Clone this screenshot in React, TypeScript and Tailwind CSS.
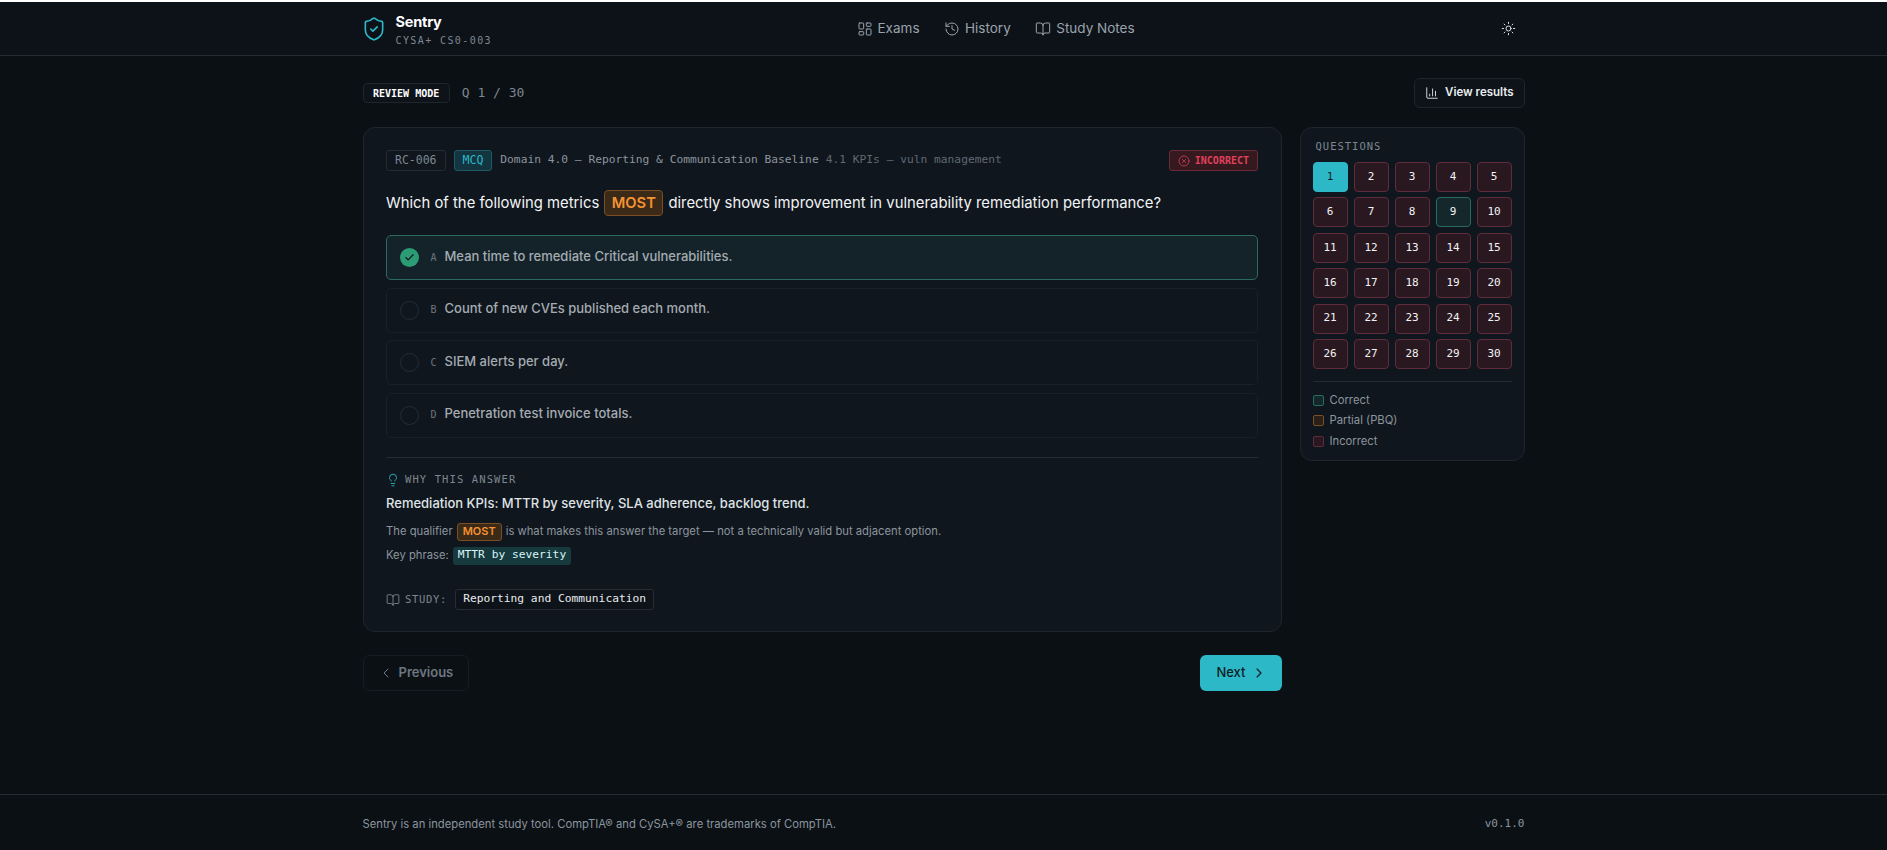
import { BookOpen, ChartColumn, Check, ChevronLeft, ChevronRight, CircleX, History, Lightbulb, LayoutDashboard, ShieldCheck, Sun } from "lucide-react";

const mono = "font-['DejaVu_Sans_Mono',monospace]";

function Most({ big }: { big?: boolean }) {
  return big ? (
    <span className="inline-flex h-[26px] items-center rounded-[4px] border border-[#7a4f22] bg-[#3a2a17] px-[6.5px] text-[14.7px] font-semibold text-[#f59332]">MOST</span>
  ) : (
    <span className="inline-flex h-[18px] items-center rounded-[3px] border border-[#7a4f22] bg-[#3a2a17] px-[5px] text-[11px] font-semibold text-[#f59332]">MOST</span>
  );
}

const options = [
  ["A", "Mean time to remediate Critical vulnerabilities."],
  ["B", "Count of new CVEs published each month."],
  ["C", "SIEM alerts per day."],
  ["D", "Penetration test invoice totals."],
];

export default function App() {
  return (
    <div className="flex h-[850px] flex-col bg-[#0b1015] font-['Inter',sans-serif] text-[#e8ecef]">
      <div className="h-[2px] bg-white" />
      <header className="flex h-[54px] justify-center border-b border-[#262c33] bg-[#0d1219]">
        <div className="flex w-[1162px] items-center">
          <div className="flex w-[494px] items-center gap-[9px]">
            <ShieldCheck size={26} strokeWidth={1.5} className="-ml-[2px] text-[#2db8c8]" />
            <div className="pt-[3px]">
              <div className="text-[14.5px] leading-[18px] font-bold tracking-[-0.2px] text-white">Sentry</div>
              <div className={`${mono} mt-[3px] text-[10px] leading-[14px] tracking-[1.4px] text-[#7d8791]`}>CYSA+ CS0-003</div>
            </div>
          </div>
          <nav className="flex items-center gap-[24.5px] text-[13.5px] text-[#9aa3ac]">
            <span className="flex items-center gap-[5px]"><LayoutDashboard size={16} strokeWidth={1.5} />Exams</span>
            <span className="flex items-center gap-[5px]"><History size={16} strokeWidth={1.5} />History</span>
            <span className="flex items-center gap-[5px]"><BookOpen size={16} strokeWidth={1.5} />Study Notes</span>
          </nav>
          <div className="mr-[9px] ml-auto text-[#e8ecef]"><Sun size={15} strokeWidth={1.5} /></div>
        </div>
      </header>

      <main className="flex flex-1 justify-center pt-[22px]">
        <div className="w-[1162px]">
          <div className="flex h-[30px] items-center">
            <span className={`${mono} flex h-[20px] items-center rounded-[4px] border border-[#1e252c] bg-[#0e1319] px-[9.5px] text-[10px] font-bold text-white`}>REVIEW MODE</span>
            <span className={`${mono} ml-[12px] text-[13px] text-[#7d8791]`}>Q 1 / 30</span>
            <button className="ml-auto flex h-[30px] items-center gap-[6px] rounded-[6px] border border-[#1e252c] bg-[#0e1319] px-[10px] text-[11.5px] font-semibold text-[#e8ecef]">
              <ChartColumn size={14} strokeWidth={1.5} />View results
            </button>
          </div>

          <div className="mt-[19px] flex items-start gap-[18px]">
            <div className="w-[919px]">
              <section className="rounded-[12px] border border-[#1e252c] bg-[#10161d] px-[22.5px] pt-[22px] pb-[20.5px]">
                <div className={`${mono} flex h-[21px] items-center text-[11.25px]`}>
                  <span className="flex h-[21px] items-center rounded-[3px] border border-[#262c33] px-[8px] text-[11.5px] text-[#7d8791]">RC-006</span>
                  <span className="ml-[8px] flex h-[21px] items-center rounded-[3px] border border-[#1d5a66] bg-[#123540] px-[8px] text-[11.5px] text-[#2db8c8]">MCQ</span>
                  <span className="ml-[8px] text-[#8c959e]">Domain 4.0 — Reporting &amp; Communication Baseline</span>
                  <span className="ml-[7px] text-[#5f6973]">4.1 KPIs — vuln management</span>
                  <span className="ml-auto flex h-[21px] items-center gap-[5px] rounded-[3px] border border-[#6b2a38] bg-[#35191f] px-[8px] text-[10px] font-bold text-[#e0405a]">
                    <CircleX size={12} strokeWidth={1.5} />INCORRECT
                  </span>
                </div>

                <h2 className="mt-[18px] flex h-[28px] items-center gap-[5px] text-[14.85px] font-normal text-[#f1f4f6]">
                  Which of the following metrics <Most big /> directly shows improvement in vulnerability remediation performance?
                </h2>

                <div className="mt-[18px] flex flex-col gap-[7.5px]">
                  {options.map(([letter, text], i) => (
                    <div key={letter} className={`flex h-[45px] items-center rounded-[5px] border pl-[12.5px] ${i === 0 ? "border-[#2b6a60] bg-[#14232a]" : "border-[#1a2027] bg-[#10161d]"}`}>
                      {i === 0 ? (
                        <span className="flex h-[19px] w-[19px] items-center justify-center rounded-full bg-[#2b9c74] text-[#0d1219]"><Check size={11} strokeWidth={2.5} /></span>
                      ) : (
                        <span className="h-[19px] w-[19px] rounded-full border border-[#262c33]" />
                      )}
                      <span className={`${mono} -mt-[1px] ml-[12px] w-[14px] text-[10px] text-[#6d7680]`}>{letter}</span>
                      <span className="-mt-[2px] text-[13px] font-medium text-[#a4abb2]">{text}</span>
                    </div>
                  ))}
                </div>

                <div className="mt-[19px] border-t border-[#262c33] pt-[14px]">
                  <div className={`${mono} flex h-[16px] items-center gap-[5px] text-[10.5px] tracking-[1.1px] text-[#7d8791]`}>
                    <Lightbulb size={14} strokeWidth={1.5} className="text-[#2db8c8]" />WHY THIS ANSWER
                  </div>
                  <p className="mt-[4px] h-[22px] text-[13px] leading-[22px] font-medium text-[#dfe3e6]">Remediation KPIs: MTTR by severity, SLA adherence, backlog trend.</p>
                  <p className="mt-[7px] flex h-[22px] items-center gap-[4px] text-[11.25px] text-[#8c959e]">
                    The qualifier <Most /> is what makes this answer the target — not a technically valid but adjacent option.
                  </p>
                  <p className="mt-[2px] flex h-[22px] items-center gap-[4px] text-[11.25px] text-[#8c959e]">
                    Key phrase:
                    <span className={`${mono} flex h-[18px] items-center rounded-[3px] bg-[#163a3e] px-[5px] text-[11.25px] text-[#d9f4f6]`}>MTTR by severity</span>
                  </p>
                  <div className={`${mono} mt-[22.5px] flex h-[21px] items-center text-[10.5px] tracking-[0.7px] text-[#7d8791]`}>
                    <BookOpen size={14} strokeWidth={1.5} className="mr-[5px]" />STUDY:
                    <span className="ml-[8px] flex h-[21px] items-center rounded-[3px] border border-[#262c33] bg-[#0e1319] px-[7px] text-[11.25px] tracking-normal text-[#e8ecef]">Reporting and Communication</span>
                  </div>
                </div>
              </section>

              <div className="mt-[23px] flex justify-between">
                <button className="flex h-[36px] items-center gap-[5px] rounded-[6px] border border-[#161c22] pr-[15px] pl-[14px] text-[13px] font-semibold text-[#6d7680]">
                  <ChevronLeft size={16} strokeWidth={1.5} />Previous
                </button>
                <button className="flex h-[36px] items-center gap-[5px] rounded-[6px] bg-[#2db8c8] pr-[15px] pl-[16px] text-[13px] font-medium text-[#0d1e26]">
                  Next<ChevronRight size={16} strokeWidth={1.75} />
                </button>
              </div>
            </div>

            <aside className="w-[225px] rounded-[12px] border border-[#1e252c] bg-[#10161d] px-[12px] pt-[11px] pb-[13px]">
              <div className={`${mono} px-[3px] text-[10.5px] leading-[14px] tracking-[1px] text-[#7d8791]`}>QUESTIONS</div>
              <div className="mt-[9px] grid grid-cols-5 gap-x-[6px] gap-y-[5.4px]">
                {Array.from({ length: 30 }, (_, i) => i + 1).map((n) => (
                  <span
                    key={n}
                    className={`${mono} flex h-[30px] items-center justify-center rounded-[4px] border text-[11px] font-medium ${
                      n === 1 ? "border-[#2db8c8] bg-[#2db8c8] text-[#0d1e26]" : n === 9 ? "border-[#2b6a60] bg-[#14272a] text-[#f1f4f6]" : "border-[#5e2c3a] bg-[#2a1820] text-[#f1f4f6]"
                    }`}
                  >
                    {n}
                  </span>
                ))}
              </div>
              <div className="mt-[12px] flex flex-col gap-[9.5px] border-t border-[#262c33] pt-[13px] text-[11.25px] leading-[11px] text-[#8c959e]">
                <span className="flex items-center gap-[6px]"><i className="h-[11px] w-[11px] rounded-[2px] border border-[#2b6a60] bg-[#14272a]" />Correct</span>
                <span className="flex items-center gap-[6px]"><i className="h-[11px] w-[11px] rounded-[2px] border border-[#7a4f22] bg-[#2a2018]" />Partial (PBQ)</span>
                <span className="flex items-center gap-[6px]"><i className="h-[11px] w-[11px] rounded-[2px] border border-[#5e2c3a] bg-[#2a1820]" />Incorrect</span>
              </div>
            </aside>
          </div>
        </div>
      </main>

      <footer className="flex h-[56px] justify-center border-t border-[#262c33] pt-[4px]">
        <div className="flex w-[1162px] items-center justify-between text-[11.25px] text-[#8c959e]">
          <span>Sentry is an independent study tool. CompTIA® and CySA+® are trademarks of CompTIA.</span>
          <span className={`${mono} text-[11px]`}>v0.1.0</span>
        </div>
      </footer>
    </div>
  );
}
